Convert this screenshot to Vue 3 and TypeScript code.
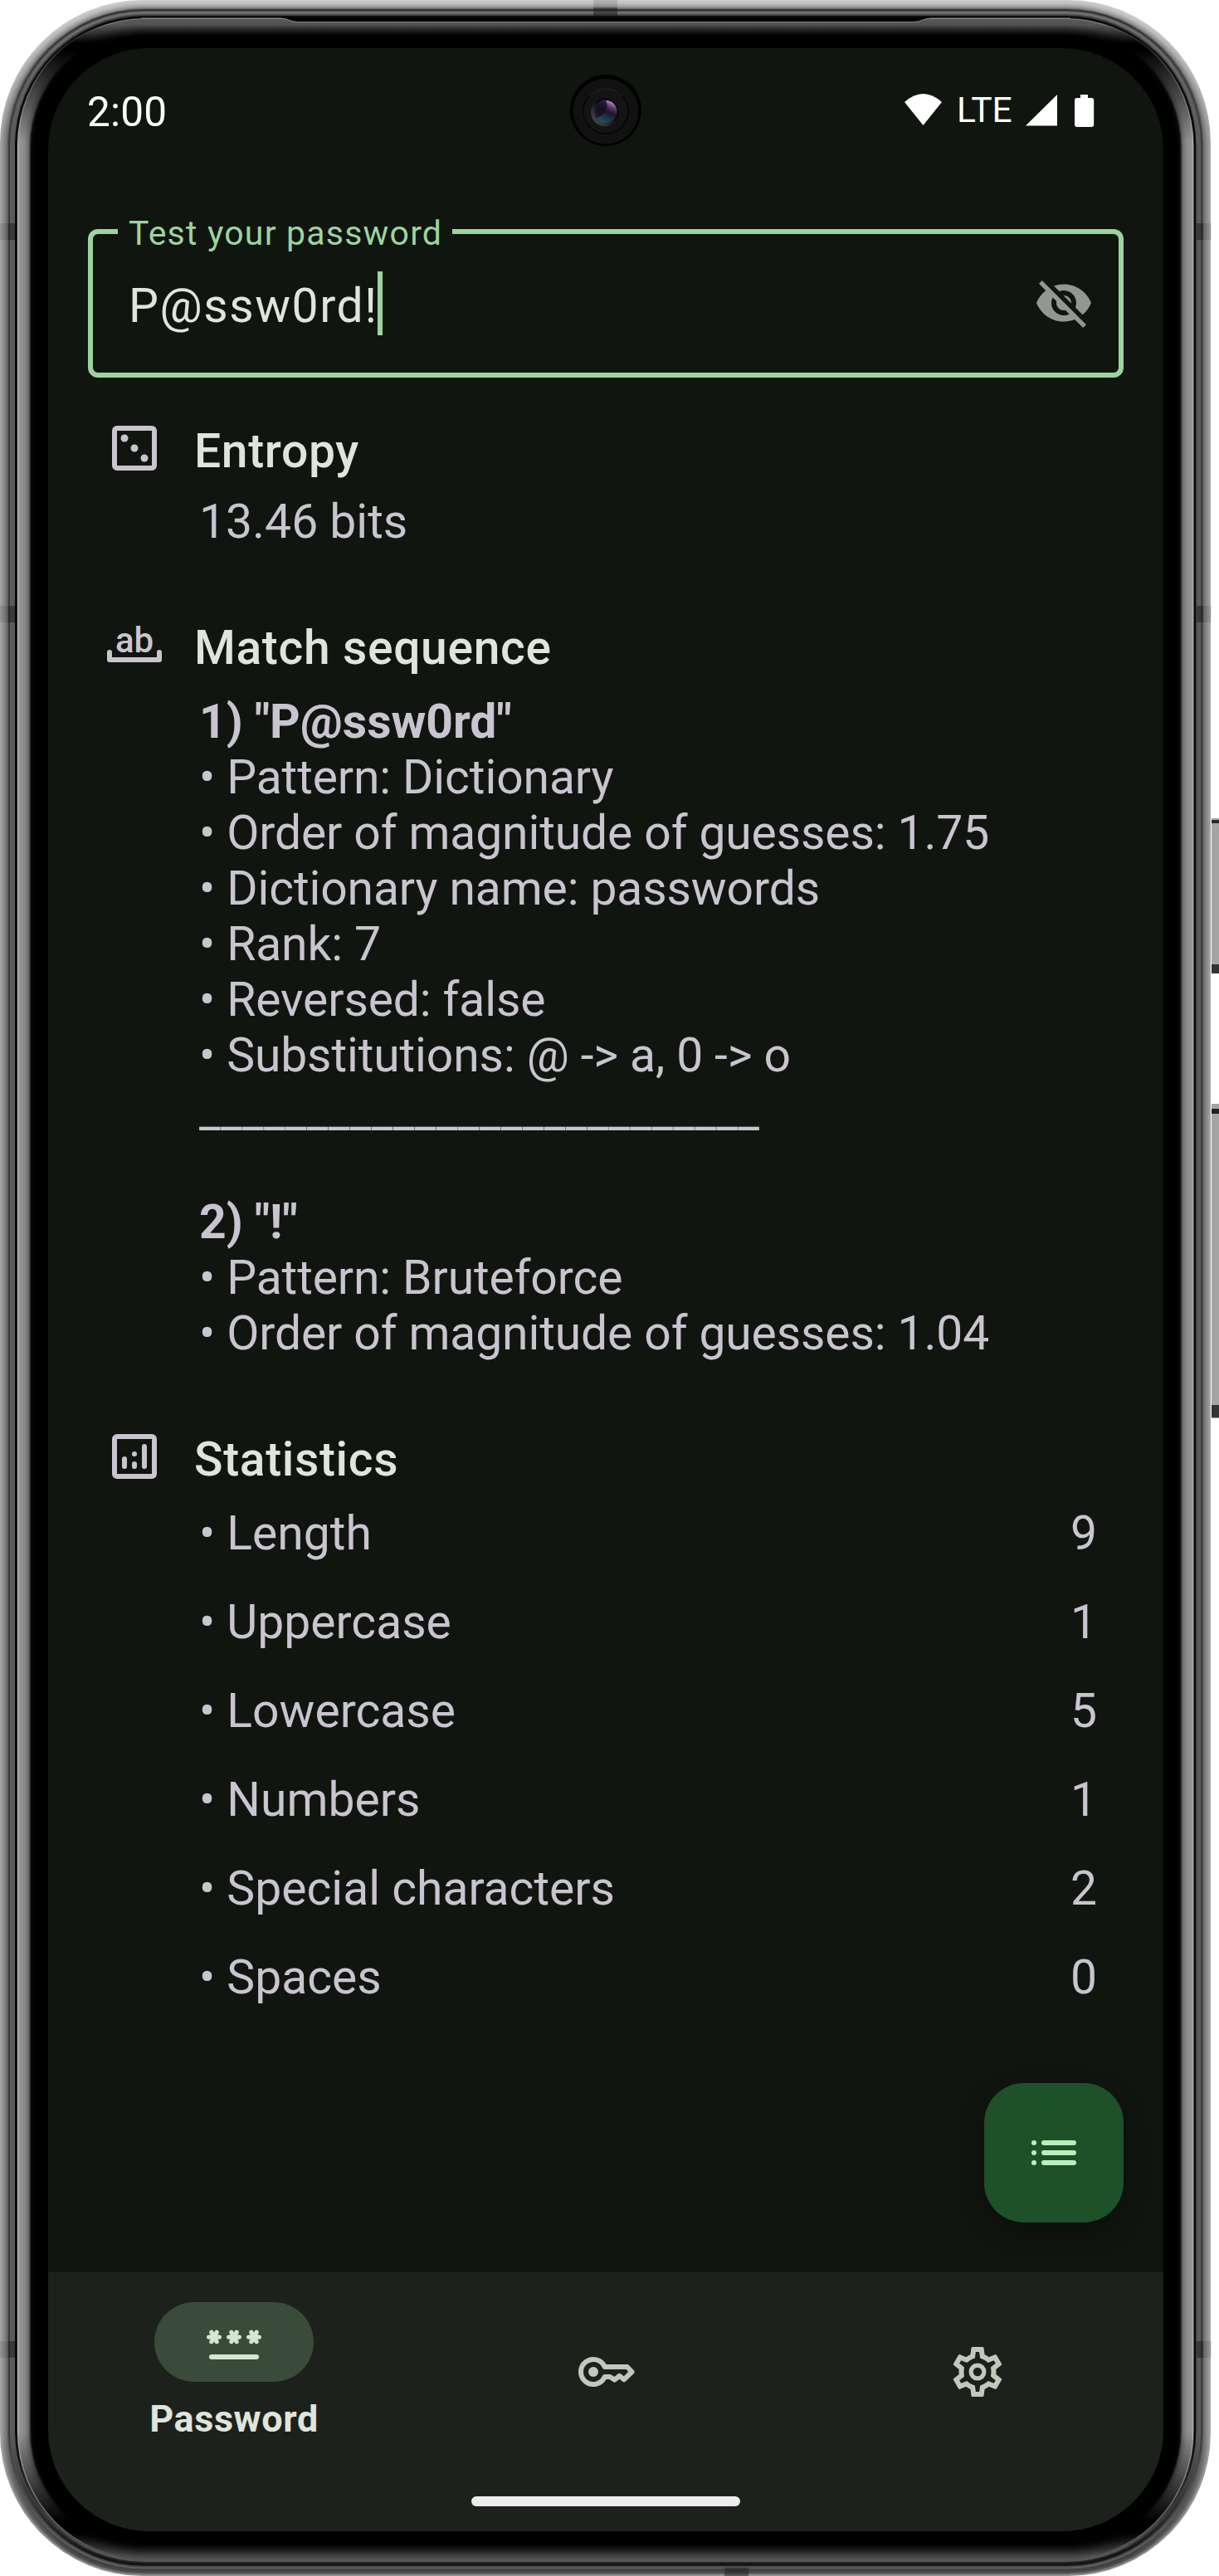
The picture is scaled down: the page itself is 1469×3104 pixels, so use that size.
<script setup lang="ts">
type Rgb = number
interface Stop { d: number; top: Rgb; side: Rgb; bottom: Rgb }

// Grey levels across the metal rim, by distance from the outer edge
const rim: Stop[] = [
  { d: 0, top: 205, side: 165, bottom: 150 },
  { d: 4, top: 190, side: 140, bottom: 75 },
  { d: 8, top: 150, side: 110, bottom: 62 },
  { d: 10, top: 110, side: 62, bottom: 105 },
  { d: 11, top: 50, side: 58, bottom: 70 },
  { d: 12, top: 50, side: 90, bottom: 72 },
  { d: 13, top: 85, side: 92, bottom: 20 },
  { d: 15, top: 120, side: 90, bottom: 20 },
  { d: 17, top: 75, side: 88, bottom: 40 },
  { d: 18, top: 60, side: 10, bottom: 84 },
  { d: 19, top: 25, side: 0, bottom: 86 },
  { d: 20, top: 0, side: 30, bottom: 84 },
  { d: 21, top: 20, side: 190, bottom: 80 },
  { d: 22, top: 130, side: 150, bottom: 78 },
  { d: 23, top: 88, side: 150, bottom: 74 },
  { d: 29, top: 82, side: 138, bottom: 54 },
  { d: 34, top: 58, side: 108, bottom: 30 },
  { d: 37, top: 42, side: 10, bottom: 14 },
  { d: 41, top: 12, side: 0, bottom: 2 },
  { d: 43, top: 0, side: 0, bottom: 0 },
]

const sample = (d: number, key: 'top' | 'side' | 'bottom'): string => {
  let i = 0
  while (i < rim.length - 2 && rim[i + 1].d <= d) i++
  const a = rim[i]
  const b = rim[i + 1]
  const t = Math.min(1, (d - a.d) / (b.d - a.d))
  const v = Math.round(a[key] + (b[key] - a[key]) * t)
  return `rgb(${v},${v},${v})`
}

const rings = Array.from({ length: 44 }, (_, d) => ({
  d,
  x: d,
  w: 1459 - d * 1.983,
  h: 3104 - d - d * 0.94,
  r: 172 - d * 0.86,
  top: sample(d, 'top'),
  side: sample(d, 'side'),
  bottom: sample(d, 'bottom'),
  corner: d >= 22 ? 'rgb(0,0,0)' : null,
}))

// Antenna lines: faint on the outer edge, darker in the groove
const bands = [
  ...[269, 730, 2821].flatMap((y) => [
    { x: 0, y, w: 10, h: 20, o: 0.12 },
    { x: 10, y, w: 8, h: 20, o: 0.5 },
    { x: 1442, y, w: 8, h: 20, o: 0.5 },
    { x: 1450, y, w: 10, h: 20, o: 0.12 },
  ]),
  { x: 715, y: 0, w: 29, h: 9, o: 0.14 },
  { x: 715, y: 9, w: 29, h: 11, o: 0.5 },
  { x: 873, y: 3094, w: 29, h: 10, o: 0.45 },
]

const matches = [
  {
    title: '1) "P@ssw0rd"',
    lines: ['Pattern: Dictionary', 'Order of magnitude of guesses: 1.75', 'Dictionary name: passwords', 'Rank: 7', 'Reversed: false', 'Substitutions: @ -> a, 0 -> o'],
  },
  { title: '2) "!"', lines: ['Pattern: Bruteforce', 'Order of magnitude of guesses: 1.04'] },
]
const divider = '_'.repeat(26)

const stats = [
  { name: 'Length', value: 9 },
  { name: 'Uppercase', value: 1 },
  { name: 'Lowercase', value: 5 },
  { name: 'Numbers', value: 1 },
  { name: 'Special characters', value: 2 },
  { name: 'Spaces', value: 0 },
]
</script>

<template>
  <div class="device">
    <svg class="frame" width="1469" height="3104" viewBox="0 0 1469 3104">
      <defs>
        <linearGradient v-for="g in rings" :id="'rim' + g.d" :key="g.d" gradientUnits="userSpaceOnUse" x1="0" y1="0" x2="0" y2="3104">
          <stop :offset="g.corner ? 30 / 3104 : 20 / 3104" :stop-color="g.top" />
          <stop v-if="g.corner" :offset="52 / 3104" :stop-color="g.corner" />
          <stop v-if="g.corner" :offset="60 / 3104" :stop-color="g.corner" />
          <stop :offset="170 / 3104" :stop-color="g.side" />
          <stop :offset="2930 / 3104" :stop-color="g.side" />
          <stop v-if="g.corner" :offset="3038 / 3104" :stop-color="g.corner" />
          <stop v-if="g.corner" :offset="3052 / 3104" :stop-color="g.corner" />
          <stop :offset="3080 / 3104" :stop-color="g.bottom" />
        </linearGradient>
        <linearGradient id="lens" x1="0.8" y1="0" x2="0.35" y2="1">
          <stop offset="0" stop-color="#d9a0ea" />
          <stop offset="0.28" stop-color="#59396b" />
          <stop offset="0.5" stop-color="#1a1424" />
          <stop offset="1" stop-color="#23546b" />
        </linearGradient>
        <linearGradient id="bezel" x1="1" y1="0" x2="0" y2="1">
          <stop offset="0.45" stop-color="#0c0c0c" />
          <stop offset="1" stop-color="#5a5a5a" />
        </linearGradient>
      </defs>
      <g>
        <rect x="1460" y="986" width="9" height="187" fill="#a4a4a4" />
        <rect x="1460" y="988" width="9" height="4" fill="#2a2a2a" />
        <rect x="1460" y="1162" width="9" height="11" fill="#333" />
        <rect x="1460" y="1330" width="9" height="379" fill="#a4a4a4" />
        <rect x="1460" y="1336" width="9" height="6" fill="#222" />
        <rect x="1460" y="1693" width="9" height="15" fill="#333" />
      </g>
      <rect v-for="g in rings" :key="g.d" :x="g.x" :y="g.x" :width="g.w" :height="g.h" :rx="g.r" :fill="`url(#rim${g.d})`" />
      <rect v-for="(b, i) in bands" :key="i" :x="b.x" :y="b.y" :width="b.w" :height="b.h" fill="#1a1a1a" :opacity="b.o" />
      <path d="M338 21.5C346 21.5 350 26 358 26H1102C1110 26 1114 21.5 1122 21.5Z" fill="#000" />
      <path d="M170 22H338C346 22 350 26.5 358 26.5H1102C1110 26.5 1114 22 1122 22H1290" fill="none" stroke="#858585" />
    </svg>

    <div class="screen">
      <header class="status">
        <span class="clock">2:00</span>
        <div class="indicators">
          <svg width="45" height="38" viewBox="0 0 45 38"><path d="M0 10Q22.500-10 45 10L22.500 38Z" fill="#fff" /></svg>
          <span class="lte">LTE</span>
          <svg class="cell" width="38" height="38" viewBox="0 0 38 38"><path d="M38 0V37.500H0Z" fill="#fff" /></svg>
          <svg class="battery" width="24" height="39" viewBox="0 0 24 39"><path d="M7 0h9v4h4a3 3 0 0 1 3.200 3v29a3 3 0 0 1-3 3H3a3 3 0 0 1-3-3V7a3 3 0 0 1 3-3h4z" fill="#fff" /></svg>
        </div>
        <svg class="camera" width="88" height="88" viewBox="-44 -44 88 88">
          <circle r="43" fill="#000" />
          <circle r="39.500" cy="1" fill="#111" />
          <circle r="27" cy="1" fill="#141414" stroke="#060606" stroke-width="1.500" />
          <path d="M-20-17A26.500 26.500 0 0 1 20-17" fill="none" stroke="#2c2c2c" />
          <circle r="17" cy="2" cx="-1" fill="url(#bezel)" />
          <circle r="13.500" cy="1.500" fill="url(#lens)" />
          <path d="M-13 0A13.500 13.500 0 0 1 0-12Q5-2-4 5T-12 6Z" fill="#170c20" opacity="0.8" />
        </svg>
      </header>

      <div class="field">
        <span class="field-label">Test your password</span>
        <div class="input">P@ssw0rd!<i class="caret" /></div>
        <svg class="eye" width="72" height="72" viewBox="0 0 24 24"><path fill="#939692" d="M12 7c2.760 0 5 2.240 5 5 0 .65-.13 1.260-.36 1.830l2.920 2.920c1.510-1.260 2.700-2.890 3.430-4.750-1.730-4.390-6-7.500-11-7.500-1.400 0-2.740.25-3.980.7l2.160 2.160C10.740 7.130 11.350 7 12 7zM2 4.270l2.280 2.280.46.46C3.080 8.300 1.780 10.020 1 12c1.730 4.390 6 7.500 11 7.500 1.550 0 3.030-.3 4.380-.84l.42.42L19.730 22 21 20.730 3.270 3 2 4.270zM7.530 9.800l1.550 1.550c-.05.21-.08.43-.08.65 0 1.660 1.340 3 3 3 .22 0 .44-.03.65-.08l1.550 1.550c-.67.33-1.410.53-2.200.53-2.760 0-5-2.240-5-5 0-.79.2-1.530.53-2.200zm4.310-.78l3.150 3.150.02-.16c0-1.660-1.340-3-3-3l-.17.01z" /></svg>
      </div>

      <main class="report">
        <section class="section">
          <div class="heading">
            <svg class="icon" viewBox="0 0 24 24">
              <rect x="4" y="4" width="16" height="16" rx="1" fill="none" stroke="currentColor" stroke-width="2" />
              <g fill="currentColor"><circle cx="8" cy="8" r="1.500" /><circle cx="12" cy="12" r="1.500" /><circle cx="16" cy="16" r="1.500" /></g>
            </svg>
            <h2>Entropy</h2>
          </div>
          <div class="body entropy">13.46 bits</div>
        </section>

        <section class="section">
          <div class="heading">
            <svg class="icon" viewBox="0 0 24 24">
              <path d="M2 15V18H22V15" fill="none" stroke="currentColor" stroke-width="2" stroke-linecap="round" stroke-linejoin="round" />
              <text class="ab" x="4.300" y="15" fill="currentColor">ab</text>
            </svg>
            <h2>Match sequence</h2>
          </div>
          <div class="body">
            <template v-for="(m, i) in matches" :key="m.title">
              <template v-if="i > 0"><div class="line divider">{{ divider }}</div><div class="line" /></template>
              <div class="line strong">{{ m.title }}</div>
              <div v-for="l in m.lines" :key="l" class="line">• {{ l }}</div>
            </template>
          </div>
        </section>

        <section class="section">
          <div class="heading">
            <svg class="icon" viewBox="0 0 24 24">
              <rect x="4" y="4" width="16" height="16" rx="1" fill="none" stroke="currentColor" stroke-width="2" />
              <path d="M8 13V16M12 15V16M16 8V16" fill="none" stroke="currentColor" stroke-width="2" stroke-linecap="round" />
              <circle cx="12" cy="11" r="1" fill="currentColor" />
            </svg>
            <h2>Statistics</h2>
          </div>
          <div class="body stats">
            <div v-for="s in stats" :key="s.name" class="stat"><span>• {{ s.name }}</span><span>{{ s.value }}</span></div>
          </div>
        </section>

        <button class="fab" type="button">
          <svg width="72" height="72" viewBox="0 0 24 24" fill="none" stroke="#b5f1b8" stroke-width="2" stroke-linecap="round">
            <path d="M4 8h.01M4 12h.01M4 16h.01M8 8H20M8 12H20M8 16H20" />
          </svg>
        </button>
      </main>

      <nav class="nav">
        <div class="tab active">
          <span class="pill">
            <svg width="72" height="72" viewBox="0 0 24 24" fill="none" stroke="#d3e8d0" stroke-linecap="round">
              <path v-for="x in [4, 12, 20]" :key="x" :d="`M${x - 2.1} 10h4.200M${x - 1.050} 8.100l2.100 3.800M${x + 1.050} 8.100l-2.100 3.800`" stroke-width="1.750" />
              <path d="M3 18H21" stroke-width="2" />
            </svg>
          </span>
          <span class="tab-label">Password</span>
        </div>
        <div class="tab">
          <svg width="72" height="72" viewBox="0 0 24 24" fill="none" stroke="#c1c9bd" stroke-width="2" stroke-linejoin="round">
            <path d="M11.580 10A5 5 0 1 0 11.580 14H13.700L15.500 15.200L17.500 13.600L19.300 15.100L22.500 12L20.600 10Z" />
            <circle cx="7" cy="12" r="2" fill="#c1c9bd" stroke="none" />
          </svg>
        </div>
        <div class="tab">
          <svg width="72" height="72" viewBox="0 0 24 24" fill="#c1c9bd">
            <path d="M19.430 12.980c.04-.32.07-.64.07-.98 0-.34-.03-.66-.07-.98l2.110-1.650c.19-.15.24-.42.12-.64l-2-3.460c-.09-.16-.26-.25-.44-.25-.06 0-.12.01-.17.03l-2.490 1c-.52-.4-1.080-.73-1.690-.98l-.38-2.650C14.460 2.180 14.250 2 14 2h-4c-.25 0-.46.18-.49.42l-.38 2.650c-.61.25-1.170.59-1.690.98l-2.490-1c-.06-.02-.12-.03-.18-.03-.17 0-.34.09-.43.25l-2 3.460c-.13.22-.07.49.12.64l2.110 1.650c-.04.32-.07.65-.07.98 0 .33.03.66.07.98l-2.110 1.650c-.19.15-.24.42-.12.64l2 3.460c.09.16.26.25.44.25.06 0 .12-.01.17-.03l2.490-1c.52.4 1.080.73 1.690.98l.38 2.650c.03.24.24.42.49.42h4c.25 0 .46-.18.49-.42l.38-2.650c.61-.25 1.170-.59 1.690-.98l2.490 1c.06.02.12.03.18.03.17 0 .34-.09.43-.25l2-3.460c.12-.22.07-.49-.12-.64l-2.110-1.650zm-1.980-1.710c.04.31.05.52.05.73 0 .21-.02.43-.05.73l-.14 1.130.89.7 1.080.84-.7 1.210-1.270-.51-1.040-.42-.9.68c-.43.32-.84.56-1.250.73l-1.060.43-.16 1.130-.2 1.350h-1.400l-.19-1.350-.16-1.130-1.060-.43c-.43-.18-.83-.41-1.230-.71l-.91-.7-1.060.43-1.270.51-.7-1.210 1.080-.84.89-.7-.14-1.130c-.03-.31-.05-.54-.05-.74s.02-.43.05-.73l.14-1.130-.89-.7-1.080-.84.7-1.210 1.270.51 1.040.42.9-.68c.43-.32.84-.56 1.250-.73l1.060-.43.16-1.130.2-1.350h1.390l.19 1.350.16 1.130 1.060.43c.43.18.83.41 1.230.71l.91.7 1.060-.43 1.270-.51.7 1.210-1.070.85-.89.7.14 1.130z" />
            <circle cx="12" cy="12" r="2.620" fill="none" stroke="#c1c9bd" stroke-width="1.750" />
          </svg>
        </div>
        <i class="home" />
      </nav>
    </div>
  </div>
</template>

<style>
body {
  background: #fff;
}
</style>

<style scoped>
.device {
  position: relative;
  width: 1469px;
  height: 3104px;
  box-sizing: border-box;
  padding: 58px 67px 54px 58px;
  overflow: hidden;
  font-family: Roboto, sans-serif;
}
.frame {
  position: absolute;
  inset: 0;
}
.screen {
  position: relative;
  width: 1344px;
  height: 2992px;
  display: flex;
  flex-direction: column;
  border-radius: 122px;
  overflow: hidden;
  background: #111510;
}
.status {
  position: relative;
  height: 218px;
  flex: none;
  box-sizing: border-box;
  padding: 48px 83px 0 47px;
  display: flex;
  justify-content: space-between;
  align-items: flex-start;
  color: #fff;
}
.clock {
  font-size: 49.5px;
  line-height: 58px;
  letter-spacing: 0.2px;
}
.indicators {
  display: flex;
  padding-top: 7px;
}
.lte {
  margin: -5px 0 0 18px;
  width: 70px;
  font-size: 42.5px;
  line-height: 50px;
}
.cell {
  margin: 1px 0 0 13px;
}
.battery {
  margin: 1px 0 0 21px;
}
.camera {
  position: absolute;
  left: 628px;
  top: 31px;
}
.field {
  position: relative;
  flex: none;
  margin: 0 48px;
  height: 179px;
  box-sizing: border-box;
  border: 6px solid #9cd49f;
  border-radius: 12px;
  display: flex;
  justify-content: space-between;
  padding: 0 30px 0 43px;
}
.field-label {
  position: absolute;
  left: 30px;
  top: -25px;
  padding: 0 12px 0 13px;
  background: #111510;
  color: #9cd49f;
  font-size: 41px;
  line-height: 48px;
  letter-spacing: 1.2px;
  white-space: nowrap;
}
.input {
  display: flex;
  align-items: flex-start;
  padding-top: 53px;
  font-size: 57px;
  line-height: 67px;
  letter-spacing: 1.55px;
  color: #e0e4db;
}
.caret {
  width: 6px;
  height: 77px;
  margin-top: -8px;
  background: #9cd49f;
}
.eye {
  margin-top: 47px;
}
.report {
  position: relative;
  flex: 1;
  padding: 49px 80px 0 68px;
  color: #cac4d0;
  font-size: 57px;
  line-height: 67px;
}
.section {
  margin-bottom: 79px;
}
.heading {
  display: flex;
  height: 72px;
}
.icon {
  width: 72px;
  height: 72px;
}
.ab {
  font-family: Roboto, sans-serif;
  font-size: 14px;
  font-weight: 500;
}
h2 {
  margin: 6px 0 0 36px;
  font-size: 57px;
  line-height: 67px;
  font-weight: 500;
  letter-spacing: 0.65px;
  color: #e0e4db;
}
.body {
  margin: 23px 0 0 114px;
}
.entropy {
  margin-top: 19px;
}
.line {
  height: 67px;
  white-space: pre;
  letter-spacing: -0.11px;
}
.divider {
  letter-spacing: 0.25px;
}
.strong {
  font-weight: 700;
  letter-spacing: 0;
}
.stats {
  display: flex;
  flex-direction: column;
  gap: 40px;
}
.stat {
  display: flex;
  justify-content: space-between;
}
.fab {
  position: absolute;
  right: 48px;
  bottom: 60px;
  width: 168px;
  height: 168px;
  display: flex;
  align-items: center;
  justify-content: center;
  border: 0;
  border-radius: 48px;
  background: #1e5128;
  box-shadow: 0 12px 30px rgba(0, 0, 0, 0.35);
}
.nav {
  position: relative;
  flex: none;
  height: 312px;
  display: flex;
  background: #1d211c;
}
.tab {
  flex: 1;
  display: flex;
  flex-direction: column;
  align-items: center;
  padding-top: 84px;
}
.active {
  padding-top: 36px;
}
.pill {
  width: 192px;
  height: 96px;
  display: flex;
  align-items: center;
  justify-content: center;
  border-radius: 48px;
  background: #3a4b39;
}
.tab-label {
  margin-top: 18px;
  font-size: 45px;
  line-height: 54px;
  font-weight: 700;
  letter-spacing: 0.6px;
  color: #e0e4db;
}
.home {
  position: absolute;
  left: 510px;
  top: 270px;
  width: 324px;
  height: 12px;
  border-radius: 6px;
  background: #ededed;
}
</style>
